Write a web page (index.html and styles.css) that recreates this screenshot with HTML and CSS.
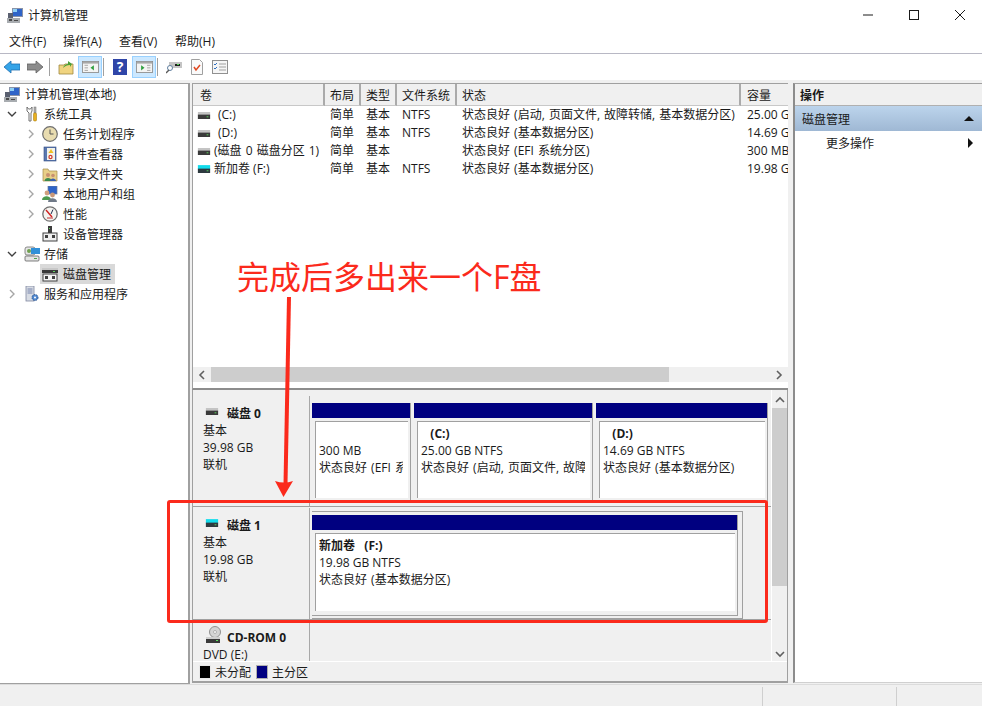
FILE: index.html
```html
<!DOCTYPE html>
<html lang="zh-CN">
<head>
    <meta charset="UTF-8">
    <title>计算机管理</title>
    <link rel="stylesheet" href="styles.css">
</head>
<body>
    <svg class="defs" width="0" height="0">
        <defs>
            <symbol id="i-disk" viewBox="0 0 16 10">
                <rect x="1" y="1" width="14" height="4" fill="#c4c4c4"/>
                <rect x="1" y="4" width="14" height="5" fill="#3a3a3a"/>
                <rect x="11" y="6" width="2" height="1" fill="#5fe05f"/>
            </symbol>
            <symbol id="i-disk-new" viewBox="0 0 16 10">
                <rect x="1" y="0" width="14" height="5" fill="#12dcec"/>
                <rect x="1" y="4" width="14" height="5" fill="#2e3a40"/>
                <rect x="11" y="6" width="2" height="1" fill="#5fe05f"/>
            </symbol>
            <symbol id="i-computer" viewBox="0 0 16 16">
                <rect x="5" y="1" width="11" height="9" fill="#8a93a8"/>
                <rect x="6" y="2" width="9" height="7" fill="#2f64c8"/>
                <rect x="6" y="2" width="4" height="3" fill="#8fd0f5"/>
                <rect x="1" y="6" width="5" height="5" fill="#5a6070"/>
                <rect x="0" y="11" width="13" height="5" fill="#a8acb0"/>
                <rect x="2" y="12" width="3" height="2" fill="#4a4a4a"/>
                <rect x="7" y="13" width="4" height="1" fill="#4a4a4a"/>
            </symbol>
            <symbol id="i-tools" viewBox="0 0 16 16">
                <path d="M3 1v4l2 2v8h2V7l1-2V1L6.500 3H4.500z" fill="#fff" stroke="#707070"/>
                <rect x="10" y="1" width="2" height="6" fill="#b0b0b0" stroke="#707070" stroke-width=".5"/>
                <rect x="9.500" y="7" width="3" height="8" rx="1" fill="#e8b020" stroke="#a07000" stroke-width=".5"/>
            </symbol>
            <symbol id="i-clock" viewBox="0 0 16 16">
                <circle cx="8" cy="8" r="7.300" fill="#e8dcb0" stroke="#6e6e6e" stroke-width="1.200"/>
                <path d="M8 3.500V8h3.500" fill="none" stroke="#555" stroke-width="1"/>
            </symbol>
            <symbol id="i-log" viewBox="0 0 16 16">
                <rect x="2" y="1" width="12" height="14" fill="#5a78b0" stroke="#304a80" stroke-width=".6"/>
                <rect x="5" y="2" width="8" height="12" fill="#f2f2ea"/>
                <path d="M9 3l2.500 4h-5z" fill="#f0c020"/>
                <circle cx="8.500" cy="11" r="2.200" fill="#d04030"/>
                <circle cx="8.500" cy="11" r=".9" fill="#fff"/>
            </symbol>
            <symbol id="i-share" viewBox="0 0 16 16">
                <path d="M1 3h5l1 2h8v10H1z" fill="#e8cf88" stroke="#a08a48" stroke-width=".7"/>
                <circle cx="6" cy="9" r="2" fill="#c89070"/>
                <path d="M2.500 15c0-4 7-4 7 0z" fill="#3c8a4c"/>
                <circle cx="11" cy="9.500" r="1.800" fill="#c89070"/>
                <path d="M8 15c0-3.500 6-3.500 6 0z" fill="#3a5fb0"/>
            </symbol>
            <symbol id="i-users" viewBox="0 0 16 16">
                <rect x="6" y="0" width="9" height="8" fill="#2f64c8" stroke="#6a7a98" stroke-width=".7"/>
                <circle cx="5" cy="7" r="2.400" fill="#d0a080"/>
                <path d="M0 14c0-5 9-5 9 0z" fill="#4c9a50"/>
                <circle cx="10.500" cy="9" r="2.400" fill="#c89878"/>
                <path d="M6 16c0-5 9-5 9 0z" fill="#707a88"/>
            </symbol>
            <symbol id="i-perf" viewBox="0 0 16 16">
                <circle cx="8" cy="8" r="7.200" fill="#f4f4f0" stroke="#707070" stroke-width="1.300"/>
                <path d="M4 4l6 7" stroke="#d02020" stroke-width="1.400"/>
                <path d="M11 3.500L9 8" stroke="#203050" stroke-width="1"/>
                <path d="M5 12h6" stroke="#c03030" stroke-width="1"/>
            </symbol>
            <symbol id="i-device" viewBox="0 0 16 16">
                <rect x="6" y="0" width="4" height="7" fill="#3c3c3c"/>
                <rect x="7" y="2" width="1" height="1" fill="#60e060"/>
                <rect x="1" y="7" width="14" height="8" fill="#f0f0f0" stroke="#404040"/>
                <rect x="3" y="9" width="3" height="3" fill="#404040"/>
                <rect x="10" y="9" width="3" height="3" fill="#404040"/>
            </symbol>
            <symbol id="i-storage" viewBox="0 0 16 16">
                <rect x="1" y="1" width="10" height="8" rx="2" fill="#e6e6e6" stroke="#707070" stroke-width=".8"/>
                <circle cx="5" cy="5" r="2" fill="#70a050"/>
                <rect x="7" y="2" width="9" height="6" fill="#3090d8"/>
                <rect x="1" y="10" width="14" height="5" rx="1" fill="#e4e4e4" stroke="#606060" stroke-width=".8"/>
                <rect x="10" y="12" width="3" height="1" fill="#50a050"/>
            </symbol>
            <symbol id="i-dm" viewBox="0 0 16 16">
                <rect x="0" y="2" width="16" height="3" fill="#c8c8c8"/>
                <rect x="0" y="4" width="16" height="3" fill="#383838"/>
                <rect x="11" y="5" width="2" height="1" fill="#60d060"/>
                <rect x="1" y="8" width="14" height="7" fill="#f4f4f4" stroke="#404040"/>
                <rect x="3" y="10" width="3" height="3" fill="#404040"/>
                <rect x="10" y="10" width="3" height="3" fill="#404040"/>
            </symbol>
            <symbol id="i-services" viewBox="0 0 16 16">
                <rect x="2" y="0" width="8" height="15" fill="#d8dce4" stroke="#8088a0" stroke-width=".8"/>
                <path d="M3.500 3h5M3.500 5h5M3.500 7h5" stroke="#6070a0" stroke-width=".8"/>
                <circle cx="11" cy="11.500" r="3" fill="#5088d0" stroke="#305890" stroke-dasharray="1.500 1"/>
                <circle cx="11" cy="11.500" r="1" fill="#fff"/>
            </symbol>
            <symbol id="i-cdrom" viewBox="0 0 16 18">
                <circle cx="10" cy="6" r="5.500" fill="#d4d4d4" stroke="#909090"/>
                <circle cx="10" cy="6" r="1.500" fill="#f8f8f8" stroke="#909090" stroke-width=".6"/>
                <rect x="1" y="11" width="14" height="3" fill="#cfcfcf"/>
                <rect x="1" y="13" width="14" height="4" fill="#3a3a3a"/>
                <rect x="11" y="14" width="2" height="1" fill="#5fe05f"/>
            </symbol>
        </defs>
    </svg>

    <div class="window">
        <div class="titlebar">
            <svg class="icon title-icon"><use href="#i-computer"/></svg>
            <span class="title-text">计算机管理</span>
            <div class="window-btns">
                <svg class="win-btn" viewBox="0 0 12 12"><path d="M1 6h10" stroke="#1a1a1a" fill="none"/></svg>
                <svg class="win-btn" viewBox="0 0 12 12"><rect x="1.500" y="1.500" width="9" height="9" stroke="#1a1a1a" fill="none"/></svg>
                <svg class="win-btn" viewBox="0 0 12 12"><path d="M1 1l10 10M11 1L1 11" stroke="#1a1a1a" fill="none"/></svg>
            </div>
        </div>

        <div class="menubar">
            <span class="menu-item first">文件(F)</span>
            <span class="menu-item">操作(A)</span>
            <span class="menu-item">查看(V)</span>
            <span class="menu-item">帮助(H)</span>
        </div>

        <div class="toolbar">
            <svg class="tool" viewBox="0 0 16 16"><path d="M0 8l7-6v3h9v6H7v3z" fill="#35a4e8" stroke="#1f6fb0" stroke-width=".8"/></svg>
            <svg class="tool" viewBox="0 0 16 16"><path d="M16 8L9 2v3H0v6h9v3z" fill="#8c8c8c" stroke="#606060" stroke-width=".8"/></svg>
            <span class="tool-sep"></span>
            <svg class="tool" viewBox="0 0 16 16"><path d="M1 6h5l1-1h8v10H1z" fill="#f0d480" stroke="#a08840" stroke-width=".8"/><path d="M5 9c1-3 3-4 5-4V2l4 3-2 3V6C9 6 7 7 5 9z" fill="#48a038"/></svg>
            <span class="tool-btn">
                <svg class="tool-in" viewBox="0 0 20 16"><rect x=".5" y="1.500" width="19" height="13" fill="#f4f4f4" stroke="#8c8c8c"/><rect x="1" y="2" width="18" height="2" fill="#a8a8a8"/><path d="M3 6h4M3 9h4M3 12h4" stroke="#9a9a9a"/><path d="M14 6v6l-4-3z" fill="#30a040"/></svg>
            </span>
            <span class="tool-sep sep-b"></span>
            <svg class="tool help" viewBox="0 0 14 16"><rect width="14" height="16" fill="#2f45a8"/><text x="7" y="13" text-anchor="middle" class="help-mark">?</text></svg>
            <span class="tool-btn btn-b">
                <svg class="tool-in" viewBox="0 0 20 16"><rect x=".5" y="1.500" width="19" height="13" fill="#f4f4f4" stroke="#8c8c8c"/><rect x="1" y="2" width="18" height="2" fill="#a8a8a8"/><path d="M13 6h4M13 9h4M13 12h4" stroke="#9a9a9a"/><path d="M6 6v6l4-3z" fill="#30a040"/></svg>
            </span>
            <span class="tool-sep sep-c"></span>
            <svg class="tool" viewBox="0 0 16 16"><rect x="3" y="3" width="13" height="6" fill="#c4c4c4"/><rect x="9" y="5" width="5" height="2" fill="#202020"/><rect x="11" y="5" width="2" height="1" fill="#50e050"/><circle cx="4" cy="9" r="2.500" fill="#fff" stroke="#6080a0"/><path d="M3 11l-3 3" stroke="#5a5a5a" stroke-width="1.500"/></svg>
            <svg class="tool t-check" viewBox="0 0 12 16"><path d="M.5.500h8l3 3v12H.5z" fill="#fafafa" stroke="#a0a0a0"/><path d="M3 8l2 3 4-5" fill="none" stroke="#e04820" stroke-width="1.500"/></svg>
            <svg class="tool t-list" viewBox="0 0 16 14"><rect x=".5" y=".5" width="15" height="13" fill="#f6f6f6" stroke="#909090"/><path d="M7 4h7M7 7h7M7 10h7" stroke="#a0a0a0"/><path d="M2 4l1 1 2-2M2 8l1 1 2-2" stroke="#3070c0" fill="none"/></svg>
        </div>

        <div class="panes">
            <div class="tree">
                <div class="node lv0"><svg class="icon"><use href="#i-computer"/></svg>计算机管理(本地)</div>
                <div class="node lv1"><svg class="chev" viewBox="0 0 10 10"><path d="M1 3l4 4 4-4"/></svg><svg class="icon"><use href="#i-tools"/></svg>系统工具</div>
                <div class="node lv2"><svg class="chev light" viewBox="0 0 10 10"><path d="M3 1l4 4-4 4"/></svg><svg class="icon"><use href="#i-clock"/></svg>任务计划程序</div>
                <div class="node lv2"><svg class="chev light" viewBox="0 0 10 10"><path d="M3 1l4 4-4 4"/></svg><svg class="icon"><use href="#i-log"/></svg>事件查看器</div>
                <div class="node lv2"><svg class="chev light" viewBox="0 0 10 10"><path d="M3 1l4 4-4 4"/></svg><svg class="icon"><use href="#i-share"/></svg>共享文件夹</div>
                <div class="node lv2"><svg class="chev light" viewBox="0 0 10 10"><path d="M3 1l4 4-4 4"/></svg><svg class="icon"><use href="#i-users"/></svg>本地用户和组</div>
                <div class="node lv2"><svg class="chev light" viewBox="0 0 10 10"><path d="M3 1l4 4-4 4"/></svg><svg class="icon"><use href="#i-perf"/></svg>性能</div>
                <div class="node lv2 no-chev"><svg class="icon"><use href="#i-device"/></svg>设备管理器</div>
                <div class="node lv1"><svg class="chev" viewBox="0 0 10 10"><path d="M1 3l4 4 4-4"/></svg><svg class="icon"><use href="#i-storage"/></svg>存储</div>
                <div class="node lv2 no-chev"><span class="selected"><svg class="icon"><use href="#i-dm"/></svg>磁盘管理</span></div>
                <div class="node lv1"><svg class="chev light" viewBox="0 0 10 10"><path d="M3 1l4 4-4 4"/></svg><svg class="icon"><use href="#i-services"/></svg>服务和应用程序</div>
            </div>

            <div class="center">
                <div class="volumes">
                    <div class="vol-table">
                        <div class="th first">卷</div><div class="th">布局</div><div class="th">类型</div><div class="th">文件系统</div><div class="th">状态</div><div class="th last">容量</div>

                        <div class="td"><svg class="vol-icon"><use href="#i-disk"/></svg><span class="vol-indent">(C:)</span></div><div class="td">简单</div><div class="td">基本</div><div class="td">NTFS</div><div class="td wide">状态良好 (启动, 页面文件, 故障转储, 基本数据分区)</div><div class="td">25.00 GB</div>

                        <div class="td"><svg class="vol-icon"><use href="#i-disk"/></svg><span class="vol-indent">(D:)</span></div><div class="td">简单</div><div class="td">基本</div><div class="td">NTFS</div><div class="td wide">状态良好 (基本数据分区)</div><div class="td">14.69 GB</div>

                        <div class="td wide"><svg class="vol-icon"><use href="#i-disk"/></svg>(磁盘 0 磁盘分区 1)</div><div class="td">简单</div><div class="td">基本</div><div class="td"></div><div class="td wide">状态良好 (EFI 系统分区)</div><div class="td">300 MB</div>

                        <div class="td"><svg class="vol-icon"><use href="#i-disk-new"/></svg>新加卷 (F:)</div><div class="td">简单</div><div class="td">基本</div><div class="td">NTFS</div><div class="td wide">状态良好 (基本数据分区)</div><div class="td">19.98 GB</div>
                    </div>
                    <div class="hscroll">
                        <svg class="arrow" viewBox="0 0 10 10"><path d="M7 1L3 5l4 4"/></svg>
                        <div class="h-track"><div class="h-thumb"></div></div>
                        <svg class="arrow" viewBox="0 0 10 10"><path d="M3 1l4 4-4 4"/></svg>
                    </div>
                </div>

                <div class="disks">
                    <div class="disks-main">
                        <div class="disk-list">
                            <div class="disk-row row-0">
                                <div class="disk-label">
                                    <div class="disk-name"><svg class="vol-icon"><use href="#i-disk"/></svg>磁盘 0</div>
                                    <div>基本</div>
                                    <div>39.98 GB</div>
                                    <div>联机</div>
                                </div>
                                <div class="parts">
                                    <div class="part p-efi">
                                        <div class="part-bar"></div>
                                        <div class="part-body"><div class="b">&nbsp;</div><div>300 MB</div><div class="wide">状态良好 (EFI 系统分区)</div></div>
                                    </div>
                                    <div class="part p-c">
                                        <div class="part-bar"></div>
                                        <div class="part-body"><div class="b">&nbsp;&nbsp;&nbsp;(C:)</div><div>25.00 GB NTFS</div><div class="wide">状态良好 (启动, 页面文件, 故障转储, 基本数据分区)</div></div>
                                    </div>
                                    <div class="part p-d">
                                        <div class="part-bar"></div>
                                        <div class="part-body"><div class="b">&nbsp;&nbsp;&nbsp;(D:)</div><div>14.69 GB NTFS</div><div class="wide">状态良好 (基本数据分区)</div></div>
                                    </div>
                                </div>
                            </div>
                            <div class="disk-row row-1">
                                <div class="disk-label">
                                    <div class="disk-name"><svg class="vol-icon"><use href="#i-disk-new"/></svg>磁盘 1</div>
                                    <div>基本</div>
                                    <div>19.98 GB</div>
                                    <div>联机</div>
                                </div>
                                <div class="parts">
                                    <div class="part p-f">
                                        <div class="part-inner">
                                            <div class="part-bar"></div>
                                            <div class="part-body"><div class="b">新加卷&nbsp;&nbsp;&nbsp;(F:)</div><div>19.98 GB NTFS</div><div class="wide">状态良好 (基本数据分区)</div></div>
                                        </div>
                                    </div>
                                </div>
                            </div>
                            <div class="disk-row row-2">
                                <div class="disk-label">
                                    <div class="disk-name"><svg class="cd-icon"><use href="#i-cdrom"/></svg>CD-ROM 0</div>
                                    <div>DVD (E:)</div>
                                </div>
                            </div>
                        </div>
                        <div class="vscroll">
                            <svg class="arrow" viewBox="0 0 10 10"><path d="M1 7l4-4 4 4"/></svg>
                            <div class="v-track"><div class="v-thumb"></div></div>
                            <svg class="arrow" viewBox="0 0 10 10"><path d="M1 3l4 4 4-4"/></svg>
                        </div>
                    </div>
                    <div class="legend">
                        <span class="swatch black"></span><span>未分配</span>
                        <span class="swatch navy"></span><span>主分区</span>
                    </div>
                </div>
            </div>

            <div class="actions">
                <div class="act-head">操作</div>
                <div class="act-group">磁盘管理<span class="tri-up"></span></div>
                <div class="act-item">更多操作<span class="tri-right"></span></div>
            </div>
        </div>

        <div class="statusbar">
            <div class="st st-a"></div>
            <div class="st st-b"></div>
            <div class="st st-c"></div>
        </div>

        <div class="note-text">完成后多出来一个F盘</div>
        <div class="note-box"></div>
        <svg class="note-arrow" viewBox="0 0 982 706"><path d="M289 297L285.500 484" stroke="#fb2a1c" stroke-width="4" fill="none"/><path d="M275 481q9 3 18 0l-9.500 16z" fill="#fb2a1c"/></svg>
    </div>
</body>
</html>
```

FILE: styles.css
```css
html, body {
    margin: 0;
    padding: 0;
}
body {
    font-family: "Open Sans", "Noto Sans CJK SC", sans-serif;
    font-size: 12px;
    color: #1a1a1a;
    background: #fff;
}
.defs {
    position: absolute;
}
.window {
    position: relative;
    width: 982px;
    height: 706px;
    display: flex;
    flex-direction: column;
    overflow: hidden;
    background: #f0f0f0;
}

/* title + menu */
.titlebar {
    height: 29px;
    background: #fff;
    display: flex;
    align-items: center;
    flex-shrink: 0;
}
.title-icon {
    margin-left: 7px;
    margin-right: 5px;
}
.icon {
    width: 16px;
    height: 16px;
    flex-shrink: 0;
}
.window-btns {
    margin-left: auto;
    display: flex;
    gap: 34px;
    padding-right: 16px;
}
.win-btn {
    width: 12px;
    height: 12px;
}
.menubar {
    height: 24px;
    background: #fff;
    display: flex;
    align-items: center;
    padding-left: 9px;
    gap: 14px;
    flex-shrink: 0;
}
.menu-item {
    width: 42px;
    white-space: nowrap;
}
.menu-item.first {
    width: 40px;
}
.toolbar {
    height: 26px;
    background: #fff;
    border-top: 1px solid #b8b8c4;
    display: flex;
    align-items: center;
    padding-left: 4px;
    flex-shrink: 0;
}
.tool {
    width: 16px;
    height: 16px;
    margin-right: 7px;
    flex-shrink: 0;
}
.help {
    width: 14px;
    margin-right: 5px;
}
.help-mark {
    font-size: 14px;
    font-weight: bold;
    fill: #fff;
}
.t-check {
    width: 12px;
    margin-left: 2px;
    margin-right: 9px;
}
.tool-sep {
    width: 1px;
    height: 18px;
    background: #a0a0a0;
    margin-left: -1px;
    margin-right: 8px;
}
.sep-b {
    margin-left: 1px;
    margin-right: 9px;
}
.sep-c {
    margin-left: 1px;
}
.tool-btn {
    width: 22px;
    height: 20px;
    background: #cce8ff;
    border: 1px solid #99d1ff;
    display: flex;
    align-items: center;
    justify-content: center;
    margin-left: -3px;
    flex-shrink: 0;
}
.btn-b {
    margin-left: 0;
}
.tool-in {
    width: 17px;
    height: 14px;
}

.panes {
    flex: 1;
    display: flex;
    min-height: 0;
    padding-top: 3px;
    background: #f0f0f0;
}

/* left tree */
.tree {
    width: 188px;
    height: 599px;
    flex-shrink: 0;
    background: #fff;
    border-right: 2px solid #a0a0a0;
    border-bottom: 1px solid #a0a0a0;
    border-top: 1px solid #a0a0a0;
}
.node {
    height: 20px;
    display: flex;
    align-items: center;
    white-space: nowrap;
}
.node .icon {
    margin-right: 4px;
}
.chev {
    width: 10px;
    height: 10px;
    flex-shrink: 0;
    margin-right: 7px;
    fill: none;
    stroke: #404040;
    stroke-width: 1.4;
}
.chev.light {
    stroke: #a6a6a6;
}
.lv0 {
    padding-left: 4px;
}
.lv0 .icon {
    margin-right: 5px;
}
.lv1 {
    padding-left: 7px;
}
.lv2 {
    padding-left: 26px;
}
.lv2 .chev {
    margin-right: 6px;
}
.lv2 .icon {
    margin-right: 5px;
}
.no-chev {
    padding-left: 40px;
}
.no-chev .icon {
    margin-left: 2px;
}
.selected {
    display: flex;
    align-items: center;
    background: #d9d9d9;
    height: 20px;
    padding-right: 4px;
}

/* middle */
.center {
    width: 596px;
    margin-left: 2px;
    margin-right: 3px;
    display: flex;
    flex-direction: column;
    flex-shrink: 0;
    height: 600px;
}
.volumes {
    height: 307px;
    flex-shrink: 0;
    background: #fff;
    border-top: 1px solid #a0a0a0;
    border-left: 1px solid #a0a0a0;
    border-bottom: 2px solid #8c8c8c;
    display: flex;
    flex-direction: column;
    box-sizing: border-box;
}
.vol-table {
    flex: 1;
    display: grid;
    grid-template-columns: 132px 36px 36px 60px 284px 47px;
    grid-template-rows: 22px;
    grid-auto-rows: 18px;
    overflow: hidden;
}
.th {
    line-height: 23px;
    padding-left: 5px;
    background: #f0f0f0;
    border-right: 2px solid #aaa;
    border-bottom: 1px solid #c8c8c8;
    box-sizing: border-box;
}
.th.first {
    padding-left: 7px;
}
.th.last {
    padding-left: 6px;
    border-right: 0;
}
.td {
    height: 18px;
    line-height: 18px;
    padding-left: 5px;
    white-space: nowrap;
    overflow: hidden;
    display: flex;
    align-items: center;
}
.td:nth-child(6n) {
    padding-left: 6px;
}
.td:nth-child(6n+1) {
    padding-left: 4px;
}
.wide {
    word-spacing: 1px;
}
.vol-icon {
    width: 14px;
    height: 9px;
    flex-shrink: 0;
    margin-right: 3px;
}
.vol-indent {
    margin-left: 4px;
}
.hscroll {
    height: 15px;
    margin-bottom: 6px;
    background: #f0f0f0;
    display: flex;
    align-items: center;
    flex-shrink: 0;
}
.arrow {
    width: 10px;
    height: 10px;
    flex-shrink: 0;
    fill: none;
    stroke: #606060;
    stroke-width: 1.6;
}
.hscroll .arrow {
    margin: 0 4px;
}
.h-track {
    flex: 1;
    height: 15px;
}
.h-thumb {
    width: 458px;
    height: 15px;
    background: #cdcdcd;
}

/* disk area */
.disks {
    flex: 1;
    min-height: 0;
    display: flex;
    flex-direction: column;
    background: #f0f0f0;
    border-left: 1px solid #a0a0a0;
    border-right: 1px solid #a0a0a0;
    border-bottom: 2px solid #a0a0a0;
    box-sizing: border-box;
}
.disks-main {
    flex: 1;
    min-height: 0;
    display: flex;
    border-bottom: 1px solid #fff;
}
.disk-list {
    flex: 1;
    min-width: 0;
    padding-top: 6px;
    overflow: hidden;
}
.disk-row {
    display: flex;
    border-bottom: 1px solid #a0a0a0;
}
.row-0 {
    height: 110px;
}
.row-1 {
    height: 111px;
    margin-top: 1px;
}
.row-2 {
    height: 40px;
    margin-top: 1px;
    border-bottom: 0;
}
.disk-label {
    width: 106px;
    flex-shrink: 0;
    padding: 8px 0 0 10px;
    line-height: 17px;
    border-right: 1px solid #a8a8a8;
    overflow: hidden;
}
.row-2 .disk-label {
    padding-top: 7px;
}
.disk-name {
    display: flex;
    align-items: center;
    gap: 5px;
    font-weight: bold;
    height: 18px;
    padding-left: 2px;
}
.disk-name .vol-icon {
    margin-top: -3px;
}
.cd-icon {
    width: 16px;
    height: 18px;
    margin-top: -5px;
}
.row-2 .disk-name {
    gap: 6px;
}
.parts {
    flex: 1;
    display: flex;
    gap: 3px;
    padding: 7px 0 0 2px;
    min-width: 0;
}
.part {
    display: flex;
    flex-direction: column;
    border-right: 1px solid #a0a0a0;
    height: 100px;
    box-sizing: border-box;
}
.p-efi {
    width: 99px;
}
.p-c {
    width: 179px;
}
.p-d {
    width: 172px;
}
.row-1 .parts {
    padding-top: 3px;
}
.p-f {
    width: 431px;
    height: 108px;
    padding: 3px 4px 2px 0;
    border-top: 1px solid #a0a0a0;
    border-bottom: 1px solid #a0a0a0;
}
.part-inner {
    flex: 1;
    min-height: 0;
    display: flex;
    flex-direction: column;
    border-right: 1px solid #a0a0a0;
    border-bottom: 1px solid #a0a0a0;
}
.part-bar {
    height: 15px;
    background: #000080;
    flex-shrink: 0;
}
.part-body {
    margin: 3px 2px 5px 3px;
    flex: 1;
    min-height: 0;
    background: #fff;
    border-top: 1px solid #a0a0a0;
    border-left: 1px solid #a0a0a0;
    padding: 3px 5px 0 3px;
    line-height: 17px;
    white-space: nowrap;
    overflow: hidden;
}
.part-body div {
    overflow: hidden;
}
.p-f .part-body {
    margin-bottom: 4px;
}
.b {
    font-weight: bold;
}
.vscroll {
    width: 15px;
    flex-shrink: 0;
    background: #f0f0f0;
    border-left: 1px solid #fff;
    display: flex;
    flex-direction: column;
    align-items: center;
    padding: 5px 0 2px;
}
.v-track {
    flex: 1;
    width: 15px;
}
.v-thumb {
    height: 178px;
    margin-top: 3px;
    background: #cdcdcd;
}
.legend {
    height: 19px;
    display: flex;
    align-items: center;
    padding-left: 6px;
    gap: 4px;
    flex-shrink: 0;
}
.swatch {
    width: 10px;
    height: 12px;
    border: 1px solid #e8e8e8;
}
.swatch.black {
    background: #000;
}
.swatch.navy {
    background: #000080;
    border-color: #b0b0b0;
    margin-left: 1px;
}

/* right */
.actions {
    flex: 1;
    background: #fff;
    border-top: 1px solid #a0a0a0;
    border-left: 2px solid #8c8c8c;
    border-bottom: 1px solid #d0d0d0;
    height: 600px;
    box-sizing: border-box;
    margin-left: 2px;
}
.act-head {
    height: 22px;
    line-height: 23px;
    padding-left: 5px;
    background: #f0f0f0;
    font-weight: bold;
    border-bottom: 1px solid #b0b0b0;
    box-sizing: border-box;
}
.act-group {
    height: 25px;
    display: flex;
    align-items: center;
    padding-left: 7px;
    background: linear-gradient(#bcd4ec, #9fb8d4);
}
.tri-up {
    margin-left: auto;
    margin-right: 8px;
    border-left: 5px solid transparent;
    border-right: 5px solid transparent;
    border-bottom: 5px solid #111;
}
.act-item {
    height: 23px;
    display: flex;
    align-items: center;
    padding-left: 31px;
}
.tri-right {
    margin-left: auto;
    margin-right: 9px;
    border-top: 5px solid transparent;
    border-bottom: 5px solid transparent;
    border-left: 5px solid #111;
}

.statusbar {
    height: 22px;
    flex-shrink: 0;
    display: flex;
    border-top: 1px solid #dcdcdc;
    box-sizing: border-box;
    padding-top: 2px;
}
.st-a {
    width: 762px;
}
.st-b {
    width: 133px;
    border-left: 1px solid #cfcfcf;
}
.st-c {
    flex: 1;
    border-left: 1px solid #cfcfcf;
}

/* red notes drawn on top of the screenshot */
.note-text {
    position: absolute;
    left: 237px;
    top: 254px;
    font-size: 32px;
    line-height: 46px;
    color: #fb2a1c;
    white-space: nowrap;
}
.note-box {
    position: absolute;
    left: 167px;
    top: 500px;
    width: 595px;
    height: 117px;
    border: 3px solid #fb2a1c;
    border-radius: 3px;
}
.note-arrow {
    position: absolute;
    left: 0;
    top: 0;
    width: 982px;
    height: 706px;
    pointer-events: none;
}
```
